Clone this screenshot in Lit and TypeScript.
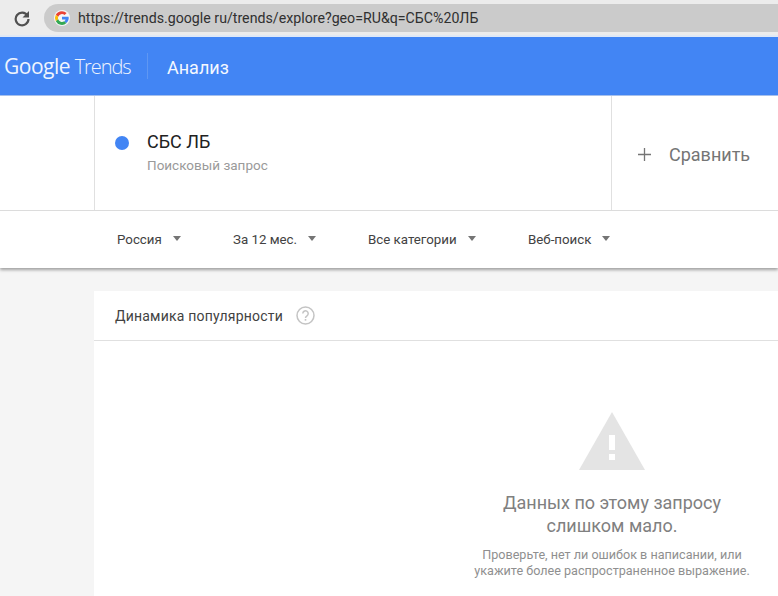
import { LitElement, css, html, svg } from "lit";
import { customElement } from "lit/decorators.js";

const FILTERS = [
	{ label: "Россия", width: 116 },
	{ label: "За 12 мес.", width: 135 },
	{ label: "Все категории", width: 160 },
	{ label: "Веб-поиск", width: 100 },
];

const googleG = svg`
	<path d="M12 5.2a6.8 6.8 0 0 1 4.6 1.8l-2 2A4 4 0 0 0 8.200 10.700L5.800 8.800A6.800 6.800 0 0 1 12 5.200z" fill="#ea4335"/>
	<path d="M5.800 8.800l2.400 1.900a4 4 0 0 0 0 2.600l-2.400 1.900a6.800 6.800 0 0 1 0-6.400z" fill="#fbbc05"/>
	<path d="M8.200 13.300a4 4 0 0 0 6 2l2.300 1.800A6.800 6.800 0 0 1 5.800 15.200z" fill="#34a853"/>
	<path d="M18.700 12.800a6.800 6.800 0 0 1-2.200 4.300l-2.300-1.800a3 3 0 0 0 1.400-1.900H12v-2.600h6.600z" fill="#4285f4"/>
`;

@customElement("app-root")
export class AppRoot extends LitElement {
	static styles = css`
		:host {
			display: block;
			width: 778px;
			height: 596px;
			overflow: hidden;
			background: #f5f5f5;
			font-family: Roboto, "Liberation Sans", sans-serif;
		}
		.browser {
			height: 37px;
			box-sizing: border-box;
			padding-top: 4px;
			background: #ececec;
			border-bottom: 2px solid #dfe8f6;
			display: flex;
			gap: 14px;
			padding-left: 14px;
		}
		.reload {
			width: 16px;
			height: 28px;
			flex: none;
		}
		.address {
			flex: 1;
			height: 28px;
			display: flex;
			align-items: center;
			gap: 8px;
			padding-left: 10px;
			background: #cbcbcb;
			border-radius: 14px 0 0 14px;
			font-size: 14.2px;
			color: #303030;
			white-space: nowrap;
		}
		.address svg {
			width: 16px;
			height: 16px;
			flex: none;
		}
		.appbar {
			height: 59px;
			box-sizing: border-box;
			background: #4285f4;
			border-bottom: 1px solid #a9c4f0;
			display: flex;
			align-items: center;
			color: #fff;
			padding-left: 4px;
		}
		.logo {
			font-family: "Open Sans", Roboto, sans-serif;
			font-size: 20px;
			letter-spacing: -0.5px;
			width: 143px;
			white-space: nowrap;
			color: #eef4fe;
			padding-bottom: 1px;
		}
		.logo b {
			font-size: 21px;
			font-weight: 500;
		}
		.logo span {
			font-weight: 300;
			letter-spacing: -1.1px;
		}
		.divider {
			width: 1px;
			height: 26px;
			background: #5f97f3;
		}
		.section {
			font-size: 18px;
			font-weight: 400;
			margin-left: 19px;
			padding-top: 3px;
			color: #f4f8ff;
		}
		.panel {
			background: #fff;
			box-shadow: 0 2px 3px rgba(0, 0, 0, 0.35);
		}
		.terms {
			height: 114px;
			display: grid;
			grid-template-columns: 94px 1fr 167px;
			border-bottom: 1px solid #dcdcdc;
		}
		.term {
			border-left: 1px solid #e0e0e0;
			display: flex;
			align-items: flex-start;
			gap: 18px;
			padding: 36px 0 0 20px;
		}
		.dot {
			width: 14px;
			height: 14px;
			border-radius: 50%;
			background: #4285f4;
			flex: none;
			margin-top: 4px;
		}
		.term-name {
			font-size: 18px;
			color: #212121;
			line-height: 20px;
		}
		.term-kind {
			font-size: 13.5px;
			color: #9a9a9a;
			line-height: 16px;
			margin-top: 5px;
		}
		.compare {
			border-left: 1px solid #e0e0e0;
			display: flex;
			align-items: center;
			gap: 18px;
			padding-left: 26px;
			padding-top: 3px;
			font-size: 18px;
			color: #757575;
		}
		.compare svg {
			width: 13px;
			height: 13px;
		}
		.filters {
			height: 57px;
			display: flex;
			align-items: center;
			padding-left: 117px;
		}
		.filter {
			display: flex;
			align-items: center;
			gap: 11px;
			font-size: 13.3px;
			color: #424242;
			white-space: nowrap;
		}
		.caret {
			width: 0;
			height: 0;
			border-left: 4.5px solid transparent;
			border-right: 4.5px solid transparent;
			border-top: 5px solid #757575;
			margin-top: -2px;
		}
		.card {
			margin: 23px 0 0 94px;
			height: 305px;
			background: #fff;
		}
		.card-head {
			height: 49px;
			border-bottom: 1px solid #e0e0e0;
			display: flex;
			align-items: center;
			gap: 13px;
			padding-left: 21px;
			font-size: 14px;
			letter-spacing: 0.2px;
			color: #424242;
		}
		.card-head svg {
			width: 19px;
			height: 19px;
		}
		.empty {
			display: flex;
			flex-direction: column;
			align-items: center;
			margin-left: 352px;
			width: 332px;
			padding-top: 71px;
			text-align: center;
		}
		.empty svg {
			width: 66px;
			height: 58px;
		}
		.empty-title {
			font-size: 18px;
			line-height: 23px;
			color: #808080;
			margin-top: 21px;
		}
		.empty-hint {
			font-size: 12.6px;
			line-height: 16px;
			color: #8f8f8f;
			margin-top: 10px;
			white-space: nowrap;
		}
	`;

	render() {
		return html`
			<div class="browser">
				<svg class="reload" viewBox="0 0 16 28">
					<path
						d="M13.500 11.500A6.400 6.400 0 1 0 14.500 15"
						fill="none"
						stroke="#505050"
						stroke-width="2.200"
					/>
					<path d="M15 7v6.500H8.500z" fill="#505050" />
				</svg>
				<div class="address">
					<svg viewBox="4 4 16 16">
						<circle cx="12" cy="12" r="8" fill="#f6f6f6" />
						${googleG}
					</svg>
					https://trends.google ru/trends/explore?geo=RU&amp;q=СБС%20ЛБ
				</div>
			</div>
			<div class="appbar">
				<div class="logo"><b>Google</b> <span>Trends</span></div>
				<div class="divider"></div>
				<div class="section">Анализ</div>
			</div>
			<div class="panel">
				<div class="terms">
					<div></div>
					<div class="term">
						<div class="dot"></div>
						<div>
							<div class="term-name">СБС ЛБ</div>
							<div class="term-kind">Поисковый запрос</div>
						</div>
					</div>
					<div class="compare">
						<svg viewBox="0 0 13 13">
							<path d="M6.500 0v13M0 6.500h13" stroke="#757575" stroke-width="1.300" />
						</svg>
						Сравнить
					</div>
				</div>
				<div class="filters">
					${FILTERS.map(
						(f) => html`
							<div class="filter" style="width: ${f.width}px">
								${f.label}
								<div class="caret"></div>
							</div>
						`
					)}
				</div>
			</div>
			<div class="card">
				<div class="card-head">
					Динамика популярности
					<svg viewBox="0 0 19 19">
						<circle cx="9.500" cy="9.500" r="8.500" fill="none" stroke="#c4c4c4" stroke-width="1.500" />
						<path
							d="M6.800 7.600a2.700 2.700 0 1 1 4.200 2.200c-1 .7-1.500 1.100-1.500 2.300"
							fill="none"
							stroke="#c4c4c4"
							stroke-width="1.500"
						/>
						<rect x="8.700" y="13" width="1.600" height="1.700" fill="#c4c4c4" />
					</svg>
				</div>
				<div class="empty">
					<svg viewBox="0 0 66 58">
						<path d="M33 0L66 58H0z" fill="#e4e4e4" />
						<rect x="30" y="23" width="6" height="15" fill="#fff" />
						<rect x="30" y="42" width="6" height="6" fill="#fff" />
					</svg>
					<div class="empty-title">Данных по этому запросу<br />слишком мало.</div>
					<div class="empty-hint">
						Проверьте, нет ли ошибок в написании, или<br />укажите более распространенное выражение.
					</div>
				</div>
			</div>
		`;
	}
}
